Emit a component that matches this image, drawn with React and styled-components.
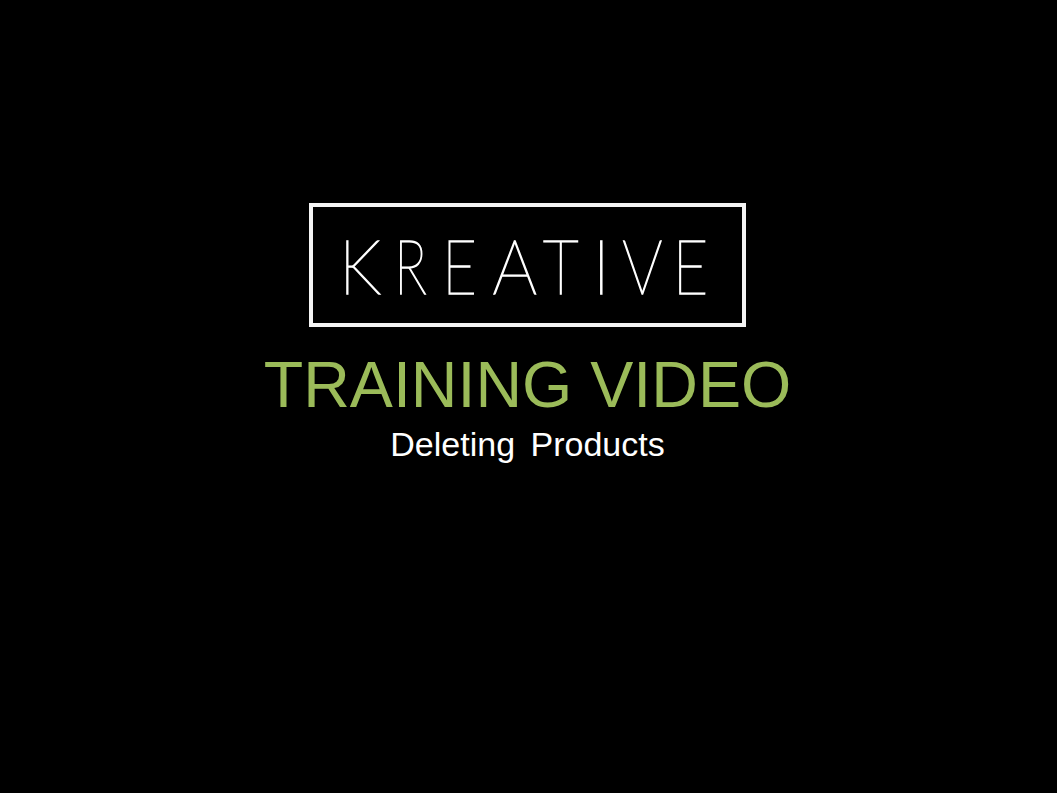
import React from "react";
import styled, { createGlobalStyle } from "styled-components";

const Global = createGlobalStyle`
  html, body { margin: 0; padding: 0; background: #000; height: 100%; overflow: hidden; }
`;

const Slide = styled.main`
  width: 1057px;
  height: 793px;
  background: #000;
  display: flex;
  flex-direction: column;
  align-items: center;
  padding: 203px 2px 0 0;
  box-sizing: border-box;
`;

const LogoBox = styled.div`
  width: 437px;
  height: 124px;
  box-sizing: border-box;
  border: 4px solid #f4f4f4;
  padding-left: 25px;
  display: flex;
  align-items: center;
  justify-content: flex-start;
`;

const Wordmark = styled.h1`
  margin: 0;
  display: flex;
  font-family: "Lato", sans-serif;
  font-weight: 100;
  font-size: 76px;
  line-height: 76px;
  color: #fff;
  -webkit-text-stroke: 1.5px #fff;
`;

const Letter = styled.span`
  display: flex;
  justify-content: center;
  flex: none;
  width: ${(p) => p.$w}px;
  transform: scaleX(${(p) => p.$sx});
`;

const Title = styled.h2`
  margin: 21px 0 0;
  font-family: "Liberation Sans", Arial, sans-serif;
  font-weight: 400;
  font-size: 64.6px;
  line-height: 74px;
  color: #9bbb59;
  white-space: nowrap;
`;

const Subtitle = styled.p`
  margin: 3px 0 0;
  font-family: "Liberation Sans", Arial, sans-serif;
  font-size: 34px;
  line-height: 39px;
  color: #fff;
  word-spacing: 6px;
  white-space: nowrap;
`;

const letters = [
  ["K", 44, 0.9],
  ["R", 57, 0.72],
  ["E", 41, 0.78],
  ["A", 69.5, 0.92],
  ["T", 21.5, 0.82],
  ["I", 60.5, 1],
  ["V", 20.5, 0.83],
  ["E", 77, 0.8],
];

export default function App() {
  return (
    <Slide>
      <Global />
      <LogoBox>
        <Wordmark aria-label="KREATIVE">
          {letters.map(([c, w, sx], i) => (
            <Letter key={i} $w={w} $sx={sx}>{c}</Letter>
          ))}
        </Wordmark>
      </LogoBox>
      <Title>TRAINING VIDEO</Title>
      <Subtitle>Deleting Products</Subtitle>
    </Slide>
  );
}
